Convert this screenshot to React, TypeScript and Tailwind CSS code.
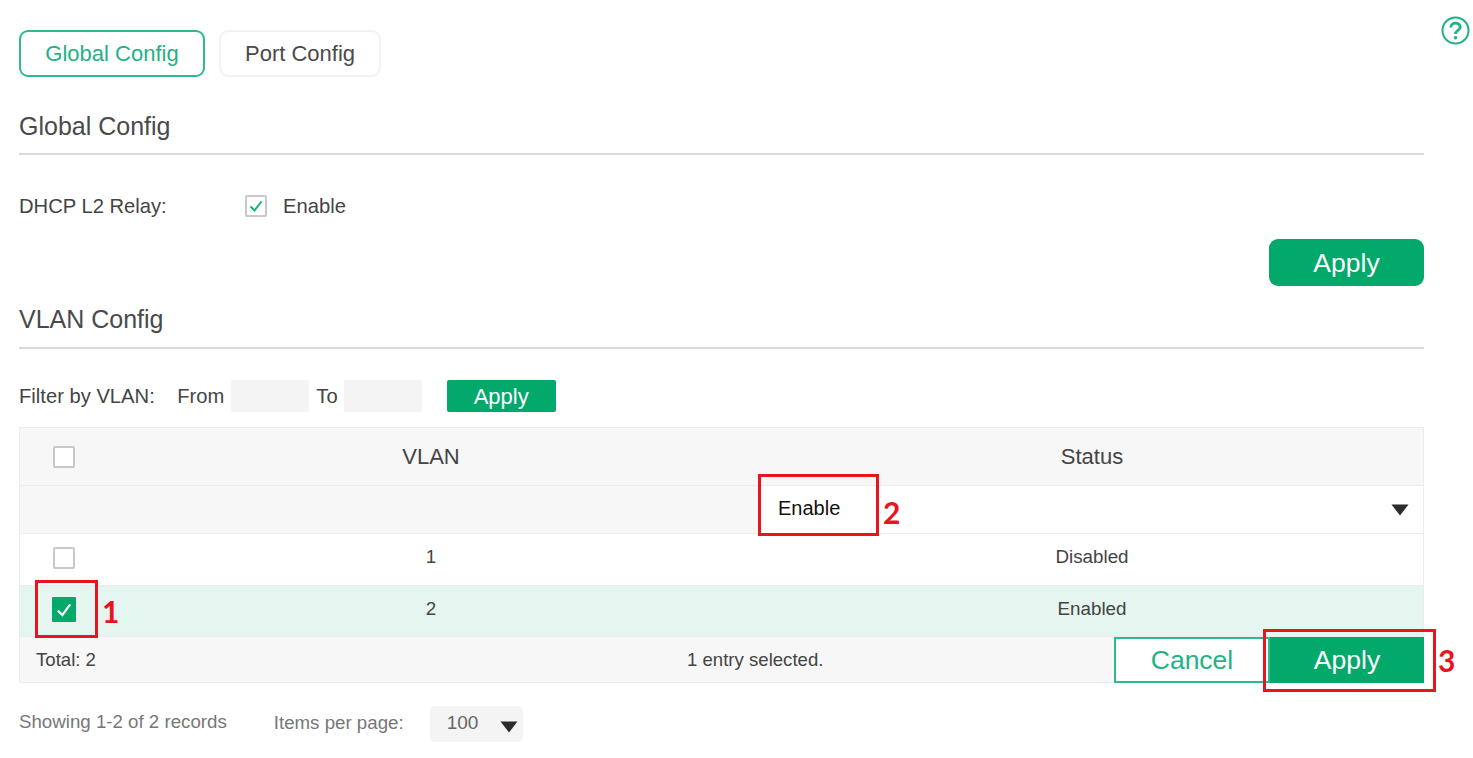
import type { ReactNode } from "react";

const green = "bg-[#03a86b]";

function Checkbox({ checked }: { checked?: boolean }) {
  return (
    <span className="flex h-[22px] w-[22px] items-center justify-center rounded-[2px] border-2 border-[#c8c8c8] bg-white">
      {checked && (
        <svg width="16" height="16" viewBox="0 0 16 16" fill="none">
          <path d="M2.5 8.5 L6.5 12.5 L13.5 3.5" stroke="#12b67c" strokeWidth="2" />
        </svg>
      )}
    </span>
  );
}

function CheckedBox() {
  return (
    <span className={"flex h-[25px] w-[24px] items-center justify-center rounded-[1px] " + green}>
      <svg width="18" height="18" viewBox="0 0 16 16" fill="none">
        <path d="M2.5 8.5 L6.5 12.5 L13.5 3" stroke="#fff" strokeWidth="2" />
      </svg>
    </span>
  );
}

function Caret({ className }: { className?: string }) {
  return (
    <svg className={className} width="18" height="12" viewBox="0 0 18 12">
      <path d="M0.5 0.5 H17.5 L9 11.5 Z" fill="#2b2b2b" />
    </svg>
  );
}

function SectionTitle({ children, className }: { children: ReactNode; className: string }) {
  return (
    <div className={"border-b-2 border-[#d9d9d9] text-[25px] leading-[32px] text-[#4a4a4a] " + className}>
      {children}
    </div>
  );
}

function Row({ children, className }: { children: ReactNode; className: string }) {
  return <div className={"grid grid-cols-[81px_660px_1fr] items-center border-b border-[#ececec] " + className}>{children}</div>;
}

export default function App() {
  return (
    <div className="relative h-[758px] w-[1473px] overflow-hidden bg-white pl-[19px] pr-[49px] pt-[30px] font-['Liberation_Sans',Arial,sans-serif] text-[#444]">
      {/* help icon */}
      <svg className="absolute left-[1441px] top-[16px]" width="29" height="29" viewBox="0 0 29 29" fill="none">
        <circle cx="14.5" cy="14.5" r="13" stroke="#1fb285" strokeWidth="2" />
        <path d="M9.8 11.5 C9.8 5.8 19.2 5.8 19.2 11.2 C19.2 14.4 14.5 14.6 14.5 18" stroke="#1fb285" strokeWidth="2.8" />
        <circle cx="14.5" cy="21.8" r="1.8" fill="#1fb285" />
      </svg>

      {/* tabs */}
      <div className="flex gap-[14px]">
        <button className="flex h-[47px] w-[186px] items-center justify-center rounded-[9px] border-2 border-[#2fb98f] text-[22px] text-[#1fb285]">
          Global Config
        </button>
        <button className="flex h-[47px] w-[162px] items-center justify-center rounded-[9px] border-2 border-[#f2f2f2] text-[22px] text-[#4a4a4a]">
          Port Config
        </button>
      </div>

      <SectionTitle className="mt-[33px] pb-[11px]">Global Config</SectionTitle>

      <div className="mt-[36px] flex h-[30px] items-center text-[20.2px]">
        <span className="w-[226px]">DHCP L2 Relay:</span>
        <Checkbox checked />
        <span className="ml-[16px]">Enable</span>
      </div>

      <div className="mt-[18px] flex justify-end">
        <button className={"h-[47px] w-[155px] rounded-[9px] pt-[2px] text-[26.5px] text-white " + green}>Apply</button>
      </div>

      <SectionTitle className="mt-[17px] pb-[12px]">VLAN Config</SectionTitle>

      {/* filter */}
      <div className="mt-[31px] flex h-[32px] items-center text-[20.2px]">
        <span>Filter by VLAN:</span>
        <span className="ml-[22.5px]">From</span>
        <span className="ml-[7px] h-[32px] w-[78px] rounded-[2px] bg-[#f4f4f4]" />
        <span className="ml-[7px]">To</span>
        <span className="ml-[6px] h-[32px] w-[78px] rounded-[2px] bg-[#f4f4f4]" />
        <button className={"ml-[25px] h-[32px] w-[109px] rounded-[2px] text-[22px] text-white " + green}>Apply</button>
      </div>

      {/* table */}
      <div className="mt-[15px] border border-[#ececec]">
        <Row className="h-[58px] bg-[#f7f7f7] text-[22px]">
          <span className="ml-[33px]"><Checkbox /></span>
          <span className="text-center">VLAN</span>
          <span className="text-center">Status</span>
        </Row>
        <div className="grid h-[48px] grid-cols-[741px_1fr] border-b border-[#ececec]">
          <div className="bg-[#f7f7f7]" />
          <div className="flex items-center justify-between pl-[17px] pr-[14px] text-[20px] text-[#111]">
            <span className="mb-[3px]">Enable</span>
            <Caret />
          </div>
        </div>
        <Row className="h-[52px] pb-[4px] text-[18.8px]">
          <span className="ml-[33px]"><Checkbox /></span>
          <span className="text-center">1</span>
          <span className="text-center">Disabled</span>
        </Row>
        <Row className="h-[51px] bg-[#e5f5ef] pb-[3px] text-[18.8px]">
          <span className="ml-[32px] flex"><CheckedBox /></span>
          <span className="text-center">2</span>
          <span className="text-center">Enabled</span>
        </Row>
        <div className="grid h-[45px] grid-cols-[1094px_1fr] bg-[#f7f7f7] text-[18.6px]">
          <div className="relative flex items-center pl-[16px]">
            <span>Total: 2</span>
            <span className="absolute left-[667px]">1 entry selected.</span>
          </div>
          <div className="mr-[-1px] flex">
            <button className="h-[46px] w-[156px] border-2 border-[#2fb98f] bg-white pt-[2px] text-[26.5px] text-[#1fb285]">Cancel</button>
            <button className={"h-[46px] flex-1 pt-[2px] text-[26.5px] text-white " + green}>Apply</button>
          </div>
        </div>
      </div>

      {/* pagination */}
      <div className="mt-[23px] flex h-[36px] items-center text-[18.7px] text-[#777]">
        <span className="mb-[4px]">Showing 1-2 of 2 records</span>
        <span className="ml-[47px] mb-[2px]">Items per page:</span>
        <div className="ml-[26px] flex h-[36px] w-[93px] items-center justify-between rounded-[5px] bg-[#f4f4f4] pl-[17px] pr-[5px] text-[19px] text-[#666]">
          <span className="mb-[2px]">100</span>
          <Caret className="mt-[5px]" />
        </div>
      </div>

      {/* red callouts */}
      <div className="absolute left-[35px] top-[580px] h-[58px] w-[63px] border-[3px] border-[#e8141e]" />
      <span className="absolute left-[102px] top-[593px] font-['Lato',sans-serif] text-[30px] font-bold leading-[36px] text-[#e8141e]">1</span>
      <div className="absolute left-[758px] top-[474px] h-[62px] w-[121px] border-[3px] border-[#e8141e]" />
      <span className="absolute left-[883px] top-[494px] font-['Lato',sans-serif] text-[30px] font-bold leading-[36px] text-[#e8141e]">2</span>
      <div className="absolute left-[1263px] top-[629px] h-[63px] w-[173px] border-[3px] border-[#e8141e]" />
      <span className="absolute left-[1438px] top-[642px] font-['Lato',sans-serif] text-[30px] font-bold leading-[36px] text-[#e8141e]">3</span>
    </div>
  );
}
